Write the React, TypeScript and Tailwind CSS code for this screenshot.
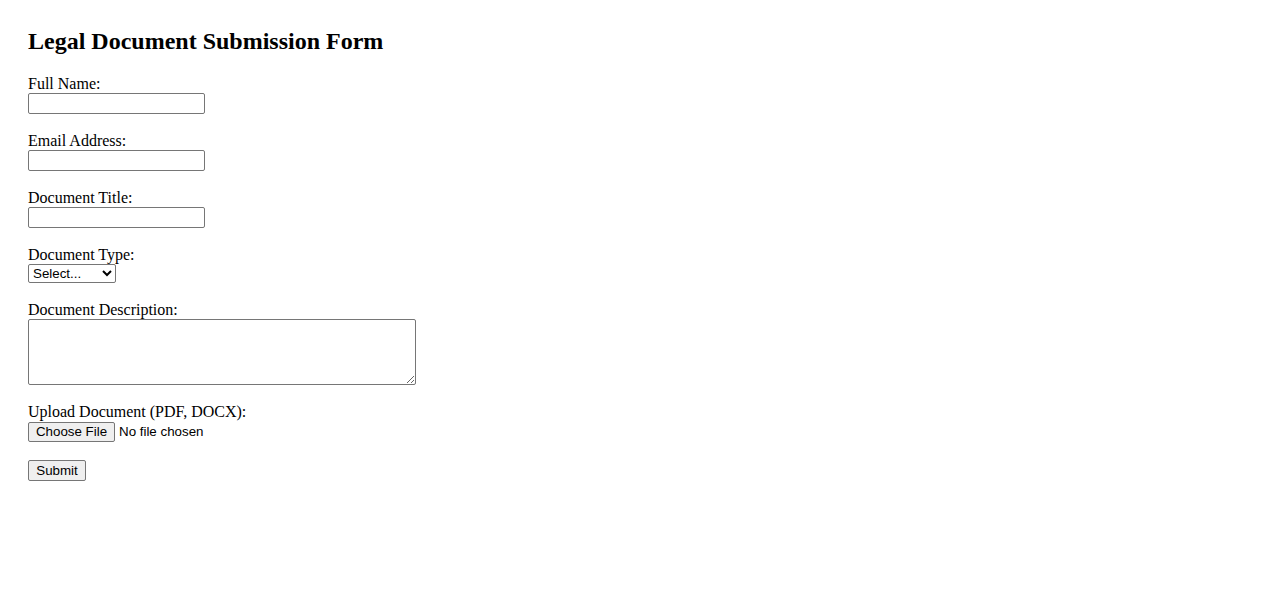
import { useState } from "react";

const labelCls = "block leading-[18px] text-[16px]";
const inputCls =
  "block w-[177px] h-[21px] border border-[#767676] rounded-[2px] bg-white px-[2px] text-[13.33px] font-['Liberation_Sans',Arial,sans-serif]";

const App = () => {
  const [fileName] = useState<string | null>(null);

  return (
    <div className="min-h-screen bg-white text-black font-['Liberation_Serif','Times_New_Roman',serif] px-[28px] pt-[27px]">
      <h2 className="text-[24px] font-bold leading-[28px] mb-[20px]">Legal Document Submission Form</h2>

      <form onSubmit={(e) => e.preventDefault()}>
        <label htmlFor="name" className={labelCls}>Full Name:</label>
        <input id="name" type="text" className={inputCls} />
        <div className="h-[18px]" />

        <label htmlFor="email" className={labelCls}>Email Address:</label>
        <input id="email" type="email" className={inputCls} />
        <div className="h-[18px]" />

        <label htmlFor="title" className={labelCls}>Document Title:</label>
        <input id="title" type="text" className={inputCls} />
        <div className="h-[18px]" />

        <label htmlFor="type" className={labelCls}>Document Type:</label>
        <select
          id="type"
          className="block w-[88px] h-[19px] border border-[#767676] rounded-[2px] bg-white text-[13.33px] font-['Liberation_Sans',Arial,sans-serif]"
        >
          <option>Select...</option>
          <option>Contract</option>
          <option>Affidavit</option>
          <option>Will</option>
        </select>
        <div className="h-[18px]" />

        <label htmlFor="desc" className={labelCls}>Document Description:</label>
        <textarea
          id="desc"
          className="block w-[388px] h-[66px] border border-[#767676] rounded-[2px] bg-white p-[2px] text-[13.33px] font-['Liberation_Mono',monospace]"
        />
        <div className="h-[18px]" />

        <label htmlFor="file" className={labelCls}>Upload Document (PDF, DOCX):</label>
        <div className="flex items-center h-[20px] mt-[1px] text-[13.33px] font-['Liberation_Sans',Arial,sans-serif]">
          <label
            htmlFor="file"
            className="h-[20px] w-[87px] flex items-center justify-center border border-[#767676] rounded-[2px] bg-[#efefef] cursor-default"
          >
            Choose File
          </label>
          <span className="ml-[4px]">{fileName ?? "No file chosen"}</span>
          <input id="file" type="file" accept=".pdf,.docx" className="hidden" />
        </div>
        <div className="h-[18px]" />

        <button
          type="submit"
          className="block w-[58px] h-[21px] border border-[#767676] rounded-[2px] bg-[#efefef] text-[13.33px] font-['Liberation_Sans',Arial,sans-serif]"
        >
          Submit
        </button>
      </form>
    </div>
  );
};

export default App;
